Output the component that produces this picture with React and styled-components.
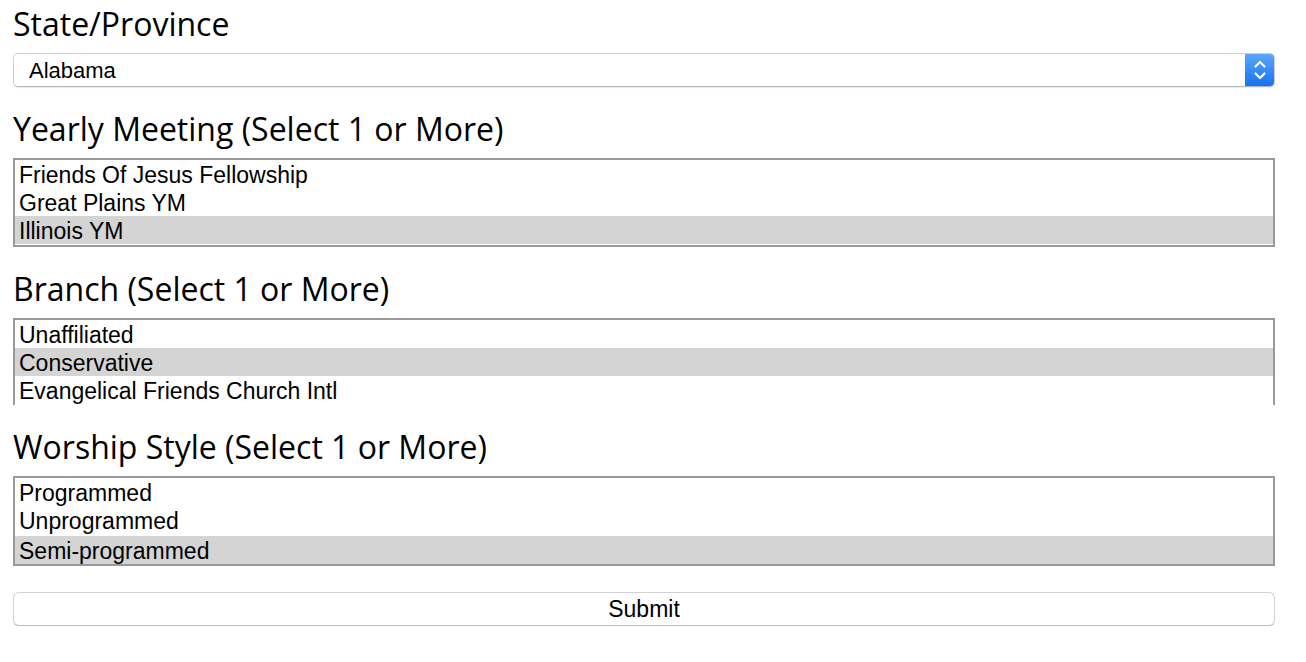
import React from "react";
import styled, { createGlobalStyle } from "styled-components";

const GlobalStyle = createGlobalStyle`
  html, body {
    margin: 0;
    padding: 0;
    background: #fff;
  }
`;

const Form = styled.form`
  padding: 0 31px 0 13px;
  display: flex;
  flex-direction: column;
`;

const Heading = styled.h2`
  font-family: "Open Sans", "DejaVu Sans", sans-serif;
  font-weight: 400;
  font-size: 32px;
  line-height: 36px;
  color: #000;
  margin: ${(p) => (p.$first ? "6px" : "24px")} 0 11px;
`;

const SelectBox = styled.div`
  height: 34px;
  box-sizing: border-box;
  border: 1px solid #d0d0d0;
  border-bottom-color: #b4b4b4;
  border-radius: 5px;
  box-shadow: 0 1px 1px rgba(0, 0, 0, 0.08);
  display: flex;
  align-items: stretch;
  overflow: hidden;
`;

const SelectValue = styled.div`
  flex: 1;
  display: flex;
  align-items: center;
  padding: 1px 0 0 15px;
  font-family: "Liberation Sans", Arial, sans-serif;
  font-size: 22px;
  color: #000;
`;

const Stepper = styled.div`
  width: 29px;
  background: linear-gradient(#5aa6fa, #1672f3);
  display: flex;
  align-items: center;
  justify-content: center;
`;

const ListBox = styled.div`
  border: 2px solid #9a9a9a;
  ${(p) => (p.$cut ? "border-bottom: none;" : "")}
  padding-bottom: ${(p) => (p.$tall ? "0" : "1px")};
  display: flex;
  flex-direction: column;
`;

const Option = styled.div`
  height: 28px;
  line-height: 30px;
  padding-left: 4px;
  font-family: "Liberation Sans", Arial, sans-serif;
  font-size: 23px;
  color: #000;
  white-space: nowrap;
  overflow: hidden;
  background: ${(p) => (p.$selected ? "#d4d4d4" : "transparent")};
  &:last-child {
    margin-top: ${(p) => (p.$tall ? "2px" : "0")};
  }
`;

const SubmitButton = styled.button`
  margin-top: 26px;
  height: 34px;
  border: 1px solid #d2d2d2;
  border-bottom-color: #bcbcbc;
  border-radius: 6px;
  background: #fff;
  box-shadow: 0 1px 1px rgba(0, 0, 0, 0.08);
  font-family: "Liberation Sans", Arial, sans-serif;
  font-size: 23px;
  color: #000;
  padding: 1px 0 0;
`;

function Chevrons() {
  return (
    <svg width="14" height="22" viewBox="0 0 14 22" fill="none" stroke="#fff" strokeWidth="2.2" strokeLinecap="round" strokeLinejoin="round">
      <path d="M2.5 7.5 L7 3 L11.5 7.5" />
      <path d="M2.5 14.5 L7 19 L11.5 14.5" />
    </svg>
  );
}

function List({ items, selected, cut, tall }) {
  return (
    <ListBox $cut={cut} $tall={tall}>
      {items.map((item) => (
        <Option key={item} $selected={item === selected} $tall={tall}>
          {item}
        </Option>
      ))}
    </ListBox>
  );
}

export default function App() {
  return (
    <>
      <GlobalStyle />
      <Form onSubmit={(e) => e.preventDefault()}>
        <Heading $first>State/Province</Heading>
        <SelectBox>
          <SelectValue>Alabama</SelectValue>
          <Stepper>
            <Chevrons />
          </Stepper>
        </SelectBox>

        <Heading>Yearly Meeting (Select 1 or More)</Heading>
        <List
          items={["Friends Of Jesus Fellowship", "Great Plains YM", "Illinois YM"]}
          selected="Illinois YM"
        />

        <Heading>Branch (Select 1 or More)</Heading>
        <List
          items={["Unaffiliated", "Conservative", "Evangelical Friends Church Intl"]}
          selected="Conservative"
          cut
        />

        <Heading>Worship Style (Select 1 or More)</Heading>
        <List
          items={["Programmed", "Unprogrammed", "Semi-programmed"]}
          selected="Semi-programmed"
          tall
        />

        <SubmitButton type="submit">Submit</SubmitButton>
      </Form>
    </>
  );
}
